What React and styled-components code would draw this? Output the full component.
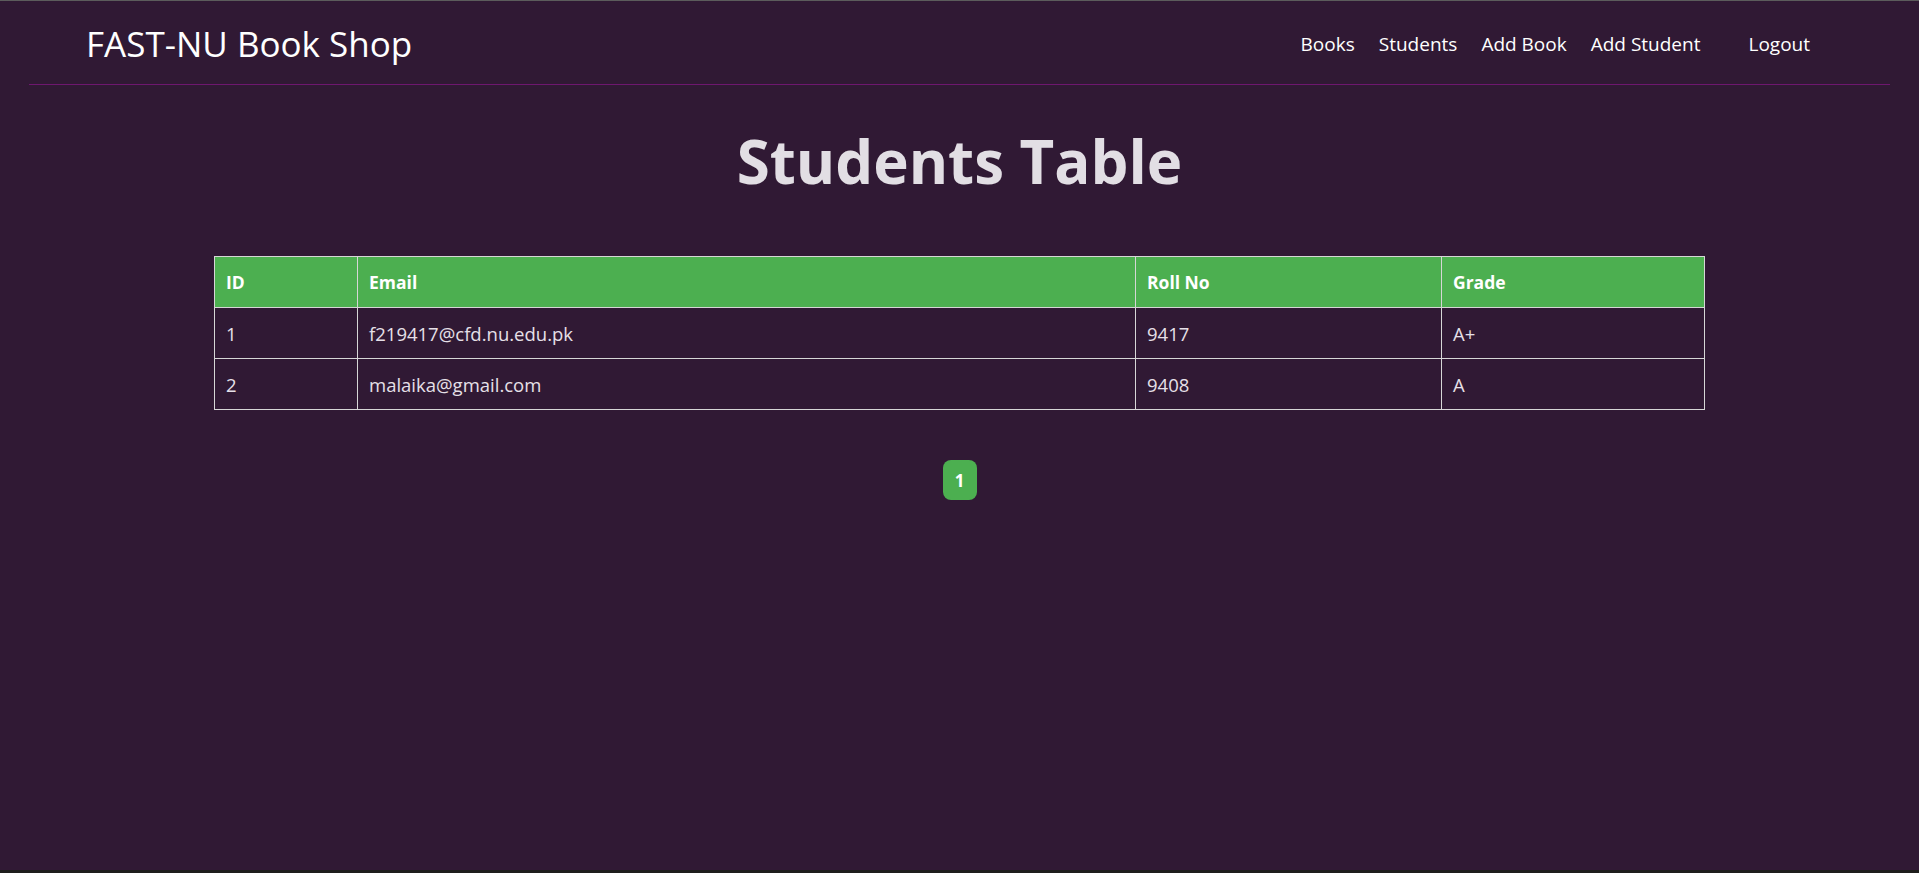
import React from 'react'
import styled, { createGlobalStyle } from 'styled-components'

const students = [
    { id: 1, email: 'f219417@cfd.nu.edu.pk', rollNo: '9417', grade: 'A+' },
    { id: 2, email: 'malaika@gmail.com', rollNo: '9408', grade: 'A' },
]

const links = ['Books', 'Students', 'Add Book', 'Add Student']

export default function App() {
    return (
        <Page>
            <GlobalStyle />
            <Header>
                <Brand>FAST-NU Book Shop</Brand>
                <Nav>
                    {links.map((link) => (
                        <NavLink key={link}>{link}</NavLink>
                    ))}
                    <Logout>Logout</Logout>
                </Nav>
            </Header>
            <Main>
                <Title>Students Table</Title>
                <Table>
                    <colgroup>
                        <col style={{ width: 143 }} />
                        <col style={{ width: 778 }} />
                        <col style={{ width: 306 }} />
                        <col style={{ width: 263 }} />
                    </colgroup>
                    <thead>
                        <tr>
                            <Th>ID</Th>
                            <Th>Email</Th>
                            <Th>Roll No</Th>
                            <Th>Grade</Th>
                        </tr>
                    </thead>
                    <tbody>
                        {students.map((s) => (
                            <tr key={s.id}>
                                <Td>{s.id}</Td>
                                <Td>{s.email}</Td>
                                <Td>{s.rollNo}</Td>
                                <Td>{s.grade}</Td>
                            </tr>
                        ))}
                    </tbody>
                </Table>
                <Pagination>
                    <PageButton active>1</PageButton>
                </Pagination>
            </Main>
        </Page>
    )
}

const GlobalStyle = createGlobalStyle`
    * { box-sizing: border-box; }
    body {
        margin: 0;
        background: #301934;
        font-family: "Open Sans", "Noto Sans", sans-serif;
    }
`

const Page = styled.div`
    min-height: 100vh;
    background: #301934;
    border-top: 1px solid #5c5c5c;
    border-bottom: 3px solid #1e1e1c;
    display: flex;
    flex-direction: column;
`

const Header = styled.header`
    margin: 0 29px;
    height: 84px;
    padding: 0 80px 0 57px;
    border-bottom: 1px solid #6e176f;
    display: flex;
    align-items: center;
    justify-content: space-between;
`

const Brand = styled.div`
    color: #ffffff;
    font-size: 35px;
    font-weight: 400;
    padding-top: 2px;
`

const Nav = styled.nav`
    display: flex;
    align-items: center;
    gap: 24px;
    padding-top: 2px;
`

const NavLink = styled.a`
    color: #ffffff;
    font-size: 19px;
    cursor: pointer;
`

const Logout = styled(NavLink)`
    margin-left: 24px;
`

const Main = styled.main`
    flex: 1;
    display: flex;
    flex-direction: column;
    align-items: center;
`

const Title = styled.h1`
    margin: 34px 0 0;
    color: #e2dee4;
    font-size: 60px;
    font-weight: 700;
    line-height: 1.4;
`

const Table = styled.table`
    margin-top: 53px;
    width: 1490px;
    border-collapse: collapse;
    table-layout: fixed;
`

const Th = styled.th`
    background: #4caf50;
    color: #ffffff;
    font-size: 17.5px;
    font-weight: 700;
    text-align: left;
    height: 51px;
    padding: 0 11px;
    border: 1px solid #d6d6d6;
`

const Td = styled.td`
    color: #e6e0e8;
    font-size: 18.5px;
    height: 51px;
    padding: 0 11px;
    border: 1px solid #d6d6d6;
`

const Pagination = styled.div`
    margin-top: 50px;
    display: flex;
    gap: 8px;
`

const PageButton = styled.button`
    width: 34px;
    height: 40px;
    border: none;
    border-radius: 8px;
    background: ${({ active }) => (active ? '#4caf50' : 'transparent')};
    color: #ffffff;
    font-family: inherit;
    font-size: 17px;
    font-weight: 700;
    cursor: pointer;
`
